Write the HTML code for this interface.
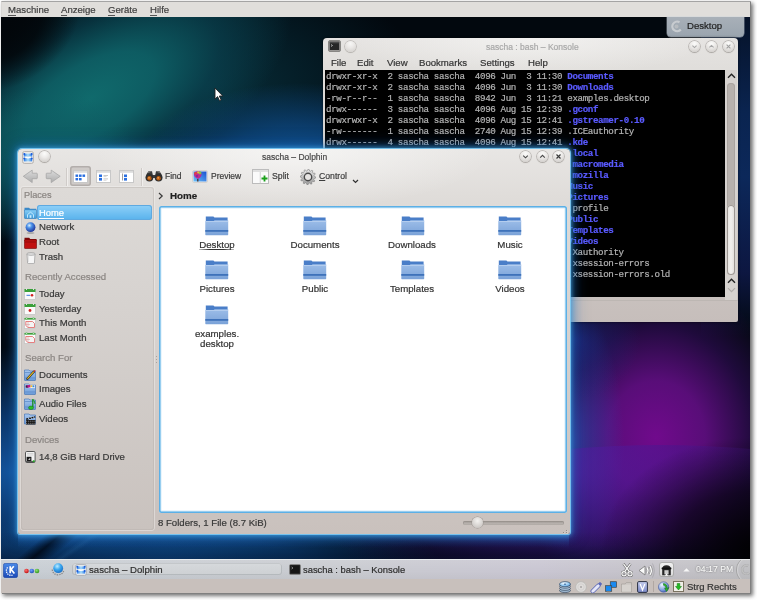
<!DOCTYPE html><html><head><meta charset="utf-8"><style>*{margin:0;padding:0;box-sizing:border-box}
html,body{width:757px;height:600px;overflow:hidden;background:#fff;font-family:"Liberation Sans",sans-serif;position:relative}
.t,#menubar span,.kmenu,#term pre{will-change:transform;-webkit-text-stroke:0.2px currentColor}
.a{position:absolute}
.t{position:absolute;white-space:pre;line-height:1}
#frame{left:0.5px;top:0.5px;width:750.5px;height:593.5px;background:#808080;box-shadow:2px 2px 4px rgba(0,0,0,.55);border-top:1px solid #a4a4a4;border-left:1px solid #d8d6d4}
#menubar{left:1.5px;top:1.5px;width:748px;height:15.5px;background:#e0dedb;font-size:9.6px;color:#3c3c3c;}
#menubar span{position:absolute;top:3.4px;line-height:1;color:#404040}
#menubar u{text-decoration:none;border-bottom:1px solid #555}
#desk{left:1px;top:17px;width:749px;height:542px;overflow:hidden;background:#02080e;}
#desk div{position:absolute}
#panel{left:1px;top:559px;width:749px;height:20px;background:linear-gradient(rgba(255,255,255,.12),rgba(255,255,255,0) 60%,rgba(0,0,0,.03)),linear-gradient(90deg,#c8ced4 0%,#c9cbd0 45%,#c9c6d2 72%,#c4c2c8 88%,#bfbfc2 100%);}
#status{left:1px;top:579px;width:749px;height:14px;background:#c8c0bc;}
#kon{left:323px;top:38px;width:415px;height:284px;border-radius:4px 4px 2px 2px;background:radial-gradient(ellipse 180px 40px at 207px 0,rgba(250,250,249,.6),rgba(250,250,249,0)),linear-gradient(#e6e4e2 0,#e0dedb 30px,#d4cfcb 130px,#c6bebb 100%);box-shadow:0 0 3px rgba(0,0,0,.6)}
#term{left:2px;top:31.5px;width:399.7px;height:227px;background:#000;overflow:hidden}
#term pre{position:absolute;left:1px;top:1.4px;font-family:"Liberation Mono",monospace;font-size:9.2px;letter-spacing:-0.38px;line-height:11px;color:#b4b4b4;}
#term pre b{color:#5a5aff}
.kmenu{font-size:9.6px;color:#333;top:20px}
.btn{position:absolute;width:11px;height:11px;border-radius:50%;background:radial-gradient(circle at 50% 25%,#fcfcfb 0%,#eceae8 40%,#d2cfcc 85%,#c4c1be 100%);box-shadow:0 0 0 .7px rgba(160,156,152,.75),0 1px 1px rgba(120,115,110,.35);}
#dol{left:17.5px;top:148.7px;width:552px;height:385px;border-radius:4px 4px 2px 2px;background:radial-gradient(ellipse 200px 60px at 276px 0,rgba(250,250,249,.75),rgba(250,250,249,0)),linear-gradient(#e8e6e4 0,#dfdcd9 50px,#d6d1ce 200px,#c9c1bd 100%);box-shadow:0 0 0 1px rgba(130,205,245,.85),0 0 4px 1px rgba(70,170,230,.75),0 0 9px 3px rgba(40,130,210,.5),0 0 16px 5px rgba(30,100,180,.28)}
</style></head><body>
<div id="frame" class="a"></div>
<div id="menubar" class="a">
 <span style="left:6.3px"><u>M</u>aschine</span>
 <span style="left:59.5px"><u>A</u>nzeige</span>
 <span style="left:106.3px"><u>G</u>eräte</span>
 <span style="left:148.5px"><u>H</u>ilfe</span>
</div>
<div id="desk" class="a">
 <div style="left:0px;top:-60px;width:420px;height:260px;background:radial-gradient(closest-side,rgba(8,52,64,.85) 0%,rgba(6,40,52,.6) 50%,rgba(4,20,30,0) 100%)"></div>
 <div style="left:-136px;top:-26px;width:450px;height:215px;transform:rotate(-30deg);background:radial-gradient(closest-side,rgba(16,106,108,1) 0%,rgba(14,96,102,.94) 32%,rgba(10,68,82,.64) 64%,rgba(3,11,20,0) 100%)"></div>
 <div style="left:-60px;top:70px;width:200px;height:160px;background:radial-gradient(closest-side,rgba(14,92,100,.8) 0%,rgba(3,11,20,0) 100%)"></div>
 <div style="left:-85px;top:-50px;width:170px;height:120px;transform:rotate(-30deg);background:radial-gradient(closest-side,rgba(2,6,10,1) 0%,rgba(2,6,10,.85) 50%,rgba(2,6,10,0) 100%)"></div>
 <div style="left:134px;top:66px;width:330px;height:170px;background:radial-gradient(closest-side,rgba(18,90,160,.95) 0%,rgba(14,74,136,.7) 50%,rgba(6,40,80,0) 100%)"></div>
 <div style="left:-150px;top:330px;width:320px;height:250px;background:radial-gradient(closest-side,rgba(22,92,170,.9) 0%,rgba(16,72,140,.7) 45%,rgba(6,40,80,0) 100%)"></div>
 <div style="left:-120px;top:490px;width:560px;height:110px;background:radial-gradient(closest-side,rgba(18,86,156,1) 0%,rgba(14,70,130,.8) 50%,rgba(6,40,80,0) 100%)"></div>
 <div style="left:700px;top:0;width:50px;height:320px;background:linear-gradient(rgba(6,18,40,1) 0%,rgba(10,36,80,1) 30%,rgba(12,40,90,1) 50%,rgba(14,24,70,.9) 80%,rgba(26,14,60,0) 100%)"></div>
 <div style="left:515px;top:260px;width:280px;height:320px;background:radial-gradient(closest-side,rgba(112,10,140,1) 0%,rgba(98,14,132,.9) 35%,rgba(50,12,90,.6) 70%,rgba(3,11,20,0) 100%)"></div>
 <div style="left:523px;top:290px;width:100px;height:270px;background:radial-gradient(closest-side,rgba(40,100,210,.5) 0%,rgba(40,80,190,.3) 50%,rgba(40,60,160,0) 100%)"></div>
 <div style="left:209px;top:428px;width:900px;height:400px;border-radius:50%;overflow:hidden"><div style="left:0;top:0;width:900px;height:400px;background:radial-gradient(ellipse 260px 160px at 360px 30px,rgba(88,30,168,.6) 0%,rgba(70,22,140,.5) 45%,rgba(0,0,0,.0) 100%)"></div></div>
 <div style="left:0;top:515px;width:749px;height:27px;background:linear-gradient(rgba(0,10,30,0) 0%,rgba(0,10,30,.15) 50%,rgba(0,10,30,.45) 100%)"></div>
 <div style="left:17px;top:516.5px;width:551px;height:14px;background:linear-gradient(rgba(60,150,230,.45),rgba(40,110,200,.15) 55%,rgba(40,110,200,0))"></div>
 <div style="left:30px;top:517px;width:34px;height:25px;transform:skewX(-50deg);background:linear-gradient(90deg,rgba(0,0,0,0),rgba(0,5,15,.8) 45%,rgba(0,0,0,0))"></div>
 <div style="left:70px;top:517px;width:14px;height:25px;transform:skewX(-55deg);background:linear-gradient(90deg,rgba(80,160,230,0),rgba(80,160,230,.1) 50%,rgba(0,0,0,0))"></div>
 <div style="left:509px;top:263px;width:130px;height:120px;background:radial-gradient(closest-side,rgba(30,50,150,.6) 0%,rgba(30,40,130,.3) 50%,rgba(20,20,80,0) 100%)"></div>
 <div style="left:600px;top:420px;width:300px;height:220px;background:radial-gradient(closest-side,rgba(0,0,0,.9) 0%,rgba(0,0,0,.6) 50%,rgba(0,0,0,0) 100%)"></div>
</div>
<div id="panel" class="a"></div>
<div id="status" class="a"></div>
<!-- desktop toolbox tab -->
<div class="a" style="left:667px;top:17px;width:76.5px;height:19.5px;border-radius:0 0 4px 4px;background:linear-gradient(#a8b0b8,#9aa4ae);box-shadow:0 0 0 .5px rgba(200,210,220,.6)"></div>
<svg class="a" style="left:671px;top:19.5px" width="11" height="13" viewBox="0 0 11 13"><path d="M8.5 2.2 A4.8 4.8 0 1 0 9.8 9.5" stroke="#c8ccd0" stroke-width="2.2" fill="none"/><circle cx="5.5" cy="6.5" r="2" fill="#b8bcc0"/></svg>
<div class="t" style="left:687.4px;top:21px;font-size:9.6px;color:#222">Desktop</div>
<!-- mouse cursor -->
<svg class="a" style="left:214px;top:87px" width="10" height="15" viewBox="0 0 10 15"><path d="M1 1 L1 12 L3.6 9.6 L5.6 13.8 L7.2 13 L5.3 9 L8.8 9 Z" fill="#fff" stroke="#222" stroke-width=".9" stroke-linejoin="round"/></svg>

<div id="kon" class="a">
 <svg class="a" style="left:4.5px;top:2px" width="13" height="12" viewBox="0 0 13 12"><rect x="0.5" y="0.5" width="12" height="11" rx="1.5" fill="#9a9896" stroke="#7a7876" stroke-width=".8"/><rect x="1.8" y="1.8" width="9.4" height="8.2" fill="#262626"/><rect x="1.8" y="1.8" width="9.4" height="1.5" fill="#4a4a4a"/><path d="M3 4.5 L4.5 5.5 L3 6.5" stroke="#ddd" stroke-width=".7" fill="none"/></svg>
 <div class="btn" style="left:22px;top:2.5px;opacity:.8"></div>
 <div class="t" style="left:162.8px;top:4.5px;font-size:8.5px;color:#a8a8a8">sascha : bash – Konsole</div>
 <div class="btn kb" style="left:366px;top:2.5px"><svg width="11" height="11" style="position:absolute;left:0;top:0"><path d="M3.4 4.6 L5.5 6.6 L7.6 4.6" stroke="#a8a8a8" stroke-width="1.1" fill="none"/></svg></div>
 <div class="btn kb" style="left:383px;top:2.5px"><svg width="11" height="11" style="position:absolute;left:0;top:0"><path d="M3.4 6.4 L5.5 4.4 L7.6 6.4" stroke="#a8a8a8" stroke-width="1.1" fill="none"/></svg></div>
 <div class="btn kb" style="left:400px;top:2.5px"><svg width="11" height="11" style="position:absolute;left:0;top:0"><path d="M3.6 3.6 L7.4 7.4 M7.4 3.6 L3.6 7.4" stroke="#a0a0a0" stroke-width="1.1" fill="none"/></svg></div>
 <div class="t kmenu" style="left:8px">File</div>
 <div class="t kmenu" style="left:34.4px">Edit</div>
 <div class="t kmenu" style="left:63.6px">View</div>
 <div class="t kmenu" style="left:96.2px">Bookmarks</div>
 <div class="t kmenu" style="left:157.1px">Settings</div>
 <div class="t kmenu" style="left:205.3px">Help</div>
 <div id="term" class="a"><pre>drwxr-xr-x  2 sascha sascha  4096 Jun  3 11:30 <b>Documents</b>
drwxr-xr-x  2 sascha sascha  4096 Jun  3 11:30 <b>Downloads</b>
-rw-r--r--  1 sascha sascha  8942 Jun  3 11:21 examples.desktop
drwx------  3 sascha sascha  4096 Aug 15 12:39 <b>.gconf</b>
drwxrwxr-x  2 sascha sascha  4096 Aug 15 12:41 <b>.gstreamer-0.10</b>
-rw-------  1 sascha sascha  2740 Aug 15 12:39 .ICEauthority
drwx------  4 sascha sascha  4096 Aug 15 12:41 <b>.kde</b>
drwxr-xr-x  3 sascha sascha  4096 Aug 15 12:41 <b>.local</b>
drwx------  3 sascha sascha  4096 Aug 15 12:41 <b>.macromedia</b>
drwx------  4 sascha sascha  4096 Aug 15 12:41 <b>.mozilla</b>
drwxr-xr-x  2 sascha sascha  4096 Jun  3 11:30 <b>Music</b>
drwxr-xr-x  2 sascha sascha  4096 Jun  3 11:30 <b>Pictures</b>
-rw-r--r--  1 sascha sascha   675 Jun  3 11:21 .profile
drwxr-xr-x  2 sascha sascha  4096 Jun  3 11:30 <b>Public</b>
drwxr-xr-x  2 sascha sascha  4096 Jun  3 11:30 <b>Templates</b>
drwxr-xr-x  2 sascha sascha  4096 Jun  3 11:30 <b>Videos</b>
-rw-------  1 sascha sascha    56 Aug 15 12:39 .Xauthority
-rw-------  1 sascha sascha  1453 Aug 15 12:41 .xsession-errors
-rw-------  1 sascha sascha  1240 Aug 15 12:39 .xsession-errors.old</pre></div>
 <!-- scrollbar -->
 <div class="a" style="left:401.7px;top:31.5px;width:12.6px;height:231px;background:#d6d2cf"></div>
 <svg class="a" style="left:404px;top:35px" width="9" height="6"><path d="M1 4.8 L4.5 1.3 L8 4.8" stroke="#222" stroke-width="1.4" fill="none"/></svg>
 <svg class="a" style="left:404px;top:239.5px" width="9" height="6"><path d="M1 4.8 L4.5 1.3 L8 4.8" stroke="#222" stroke-width="1.4" fill="none"/></svg>
 <svg class="a" style="left:404px;top:249px" width="9" height="6"><path d="M1 1.2 L4.5 4.7 L8 1.2" stroke="#b0aca8" stroke-width="1.2" fill="none"/></svg>
 <div class="a" style="left:403.7px;top:44.7px;width:8.6px;height:192px;border-radius:4px;background:#b7b1ad;box-shadow:inset 0 0 0 1px #aaa4a0"></div>
 <div class="a" style="left:403.7px;top:167px;width:8.6px;height:70px;border-radius:4px;background:linear-gradient(90deg,#e6e3e0,#f2f0ee 50%,#dedad7);box-shadow:inset 0 0 0 1px #9c9692"></div>
 <div class="a" style="left:0;top:261.5px;width:415px;height:1px;background:#bdb7b3"></div>
</div>


<div id="dol" class="a"></div>
<svg class="a" style="left:21.5px;top:150.5px" width="12" height="13" viewBox="0 0 12 13">
<defs><linearGradient id="dib" x1="0" y1="0" x2="1" y2="0"><stop offset="0" stop-color="#2a7ae8"/><stop offset=".5" stop-color="#a8dcfa"/><stop offset="1" stop-color="#2a7ae8"/></linearGradient></defs>
<rect x="0.6" y="0.6" width="10.8" height="11.8" rx="1.8" fill="#f0eeec" stroke="#b0aca8" stroke-width=".9"/>
<rect x="1.8" y="2.6" width="8.4" height="3" fill="url(#dib)"/>
<rect x="1.8" y="7.2" width="8.4" height="3.2" fill="url(#dib)"/>
<circle cx="2.3" cy="2.9" r="1" fill="#1a5ad8"/><circle cx="9.7" cy="2.9" r="1" fill="#1a5ad8"/>
<circle cx="2.3" cy="7.6" r="1" fill="#1a5ad8"/><circle cx="9.7" cy="7.6" r="1" fill="#1a5ad8"/>
<path d="M3.5 5.8 Q6 7.8 8.5 5.8" stroke="#fff" stroke-width="1.3" fill="none"/>
</svg>
<div class="btn" style="left:39px;top:151px"></div>
<div class="t " style="left:261.90px;top:153.10px;font-size:8.5px;color:#484848;">sascha – Dolphin</div>
<div class="btn" style="left:520.0px;top:150.7px"><svg width="11" height="11" style="position:absolute;left:0;top:0"><path d="M3.2 4.6 L5.5 6.8 L7.8 4.6" stroke="#484848" stroke-width="1.15" fill="none"/></svg></div>
<div class="btn" style="left:536.5px;top:150.7px"><svg width="11" height="11" style="position:absolute;left:0;top:0"><path d="M3.2 6.6 L5.5 4.4 L7.8 6.6" stroke="#484848" stroke-width="1.15" fill="none"/></svg></div>
<div class="btn" style="left:553.4px;top:150.7px"><svg width="11" height="11" style="position:absolute;left:0;top:0"><path d="M3.5 3.5 L7.5 7.5 M7.5 3.5 L3.5 7.5" stroke="#3a3a3a" stroke-width="1.2" fill="none"/></svg></div>
<svg class="a" style="left:22px;top:168px" width="40" height="16" viewBox="0 0 40 16">
<defs><linearGradient id="ga" x1="0" y1="0" x2="0" y2="1"><stop offset="0" stop-color="#dcdcdc"/><stop offset="1" stop-color="#acacac"/></linearGradient></defs>
<path d="M1.3 8.3 L10.2 2.1 L10.2 5.2 L14.6 5.2 Q15.3 5.2 15.3 5.9 L15.3 10 Q15.3 10.7 14.6 10.7 L10.2 10.7 L10.2 14.6 Z" fill="url(#ga)" stroke="#a0a0a0" stroke-width="0.7" stroke-linejoin="round"/>
<path d="M38.2 8.3 L29.2 2.1 L29.2 5.2 L24.9 5.2 Q24.2 5.2 24.2 5.9 L24.2 10 Q24.2 10.7 24.9 10.7 L29.2 10.7 L29.2 14.6 Z" fill="url(#ga)" stroke="#a0a0a0" stroke-width="0.7" stroke-linejoin="round"/>
</svg>
<div class="a" style="left:66.00px;top:168.00px;width:1.00px;height:18.00px;background:#cfcbc8;box-shadow:1px 0 0 #f0eeec"></div>
<div class="a" style="left:70.00px;top:166.20px;width:20.70px;height:19.60px;border-radius:3px;background:#cfcbc8;box-shadow:inset 0 0 0 1.5px #b3aeab"></div>
<svg class="a" style="left:73.2px;top:170px" width="15" height="13" viewBox="0 0 15 13"><rect x="0.5" y="0.5" width="14" height="12" fill="#fff" stroke="#c8c8c8"/><rect x="1" y="1" width="13" height="1.8" fill="#dcdcdc"/><rect x="2.5" y="4.5" width="2.6" height="2.4" fill="#2a6fe0"/><rect x="6" y="4.5" width="2.6" height="2.4" fill="#2a6fe0"/><rect x="9.5" y="4.5" width="2.6" height="2.4" fill="#2a6fe0"/><rect x="2.5" y="8" width="2.6" height="2.4" fill="#2a6fe0"/><rect x="6" y="8" width="2.6" height="2.4" fill="#2a6fe0"/></svg>
<svg class="a" style="left:95.5px;top:170px" width="15" height="13" viewBox="0 0 15 13"><rect x="0.5" y="0.5" width="14" height="12" fill="#fff" stroke="#c8c8c8"/><rect x="1" y="1" width="13" height="1.8" fill="#dcdcdc"/><rect x="3" y="4.5" width="3" height="2.6" fill="#2a6fe0"/><rect x="7.5" y="5.0" width="4.5" height="0.8" fill="#bbb"/><rect x="7.5" y="6.3" width="3" height="0.8" fill="#ccc"/><rect x="3" y="8" width="3" height="2.6" fill="#2a6fe0"/><rect x="7.5" y="8.5" width="4.5" height="0.8" fill="#bbb"/><rect x="7.5" y="9.8" width="3" height="0.8" fill="#ccc"/></svg>
<svg class="a" style="left:118.7px;top:170px" width="15" height="13" viewBox="0 0 15 13"><rect x="0.5" y="0.5" width="14" height="12" fill="#fff" stroke="#c8c8c8"/><rect x="1" y="1" width="13" height="1.8" fill="#dcdcdc"/><rect x="3" y="3.5" width="0.8" height="7" fill="#888"/><rect x="5" y="4.5" width="3" height="2.6" fill="#2a6fe0"/><rect x="5" y="8" width="3" height="2.6" fill="#2a6fe0"/></svg>
<div class="a" style="left:140.50px;top:168.00px;width:1.00px;height:18.00px;background:#cfcbc8;box-shadow:1px 0 0 #f0eeec"></div>
<svg class="a" style="left:145px;top:170.2px" width="18" height="12" viewBox="0 0 18 12">
<path d="M0.8 8 Q1 3.5 3.5 1.2 L7 1.2 L7.8 5 L10.2 5 L11 1.2 L14.5 1.2 Q17 3.5 17.2 8 Z" fill="#3a3a3a"/>
<circle cx="4.4" cy="7.6" r="3.9" fill="#2e2e2e"/><circle cx="13.6" cy="7.6" r="3.9" fill="#2e2e2e"/>
<circle cx="4.4" cy="8.3" r="2.2" fill="#b85a10"/><circle cx="13.6" cy="8.3" r="2.2" fill="#b85a10"/>
<circle cx="4" cy="7.8" r=".9" fill="#f0a050"/><circle cx="13.2" cy="7.8" r=".9" fill="#f0a050"/>
<path d="M3 2.5 L5.5 1.8" stroke="#888" stroke-width=".8"/><path d="M12.5 1.8 L15 2.5" stroke="#888" stroke-width=".8"/>
</svg>
<div class="t " style="left:164.80px;top:172.10px;font-size:8.5px;color:#3c3c3c;">Find</div>
<svg class="a" style="left:192px;top:170px" width="16" height="13" viewBox="0 0 16 13">
<defs><linearGradient id="sky" x1="1" y1="0" x2="0" y2="1"><stop offset="0" stop-color="#1a50d0"/><stop offset="1" stop-color="#6ac0f8"/></linearGradient></defs>
<rect x="0.5" y="0.5" width="15" height="12" rx="1.5" fill="#f2f0ee" stroke="#d0ccc8" stroke-width=".8"/>
<rect x="1.5" y="1.5" width="13" height="10" fill="url(#sky)"/>
<path d="M2 4.5 Q2 1.2 5.5 1.2 Q9.5 1.2 9.5 4.5 Q9.5 7 6 9 Q2 7 2 4.5Z" fill="#c02a90"/>
<circle cx="3.6" cy="3.2" r="1.3" fill="#e04040"/><circle cx="8" cy="3" r="1.4" fill="#8ac040"/><circle cx="6.2" cy="2.4" r="1.1" fill="#e0c040"/><circle cx="5" cy="6" r="1" fill="#7a2aa0"/>
<path d="M5.8 9 V11.5" stroke="#4a2a1a" stroke-width="1.2"/>
</svg>
<div class="t " style="left:211.00px;top:172.10px;font-size:8.5px;color:#3c3c3c;">Preview</div>
<svg class="a" style="left:252px;top:169px" width="17" height="15" viewBox="0 0 17 15">
<rect x="0.5" y="0.5" width="16" height="14" fill="#fafafa" stroke="#bcbcbc"/><rect x="1" y="1" width="15" height="2" fill="#e0e0e0"/>
<rect x="7.8" y="3" width="0.8" height="11.5" fill="#c8c8c8"/>
<path d="M9.5 9.5 H15.5 M12.5 6.5 V12.5" stroke="#1aa01a" stroke-width="1.8"/>
</svg>
<div class="t " style="left:271.60px;top:171.94px;font-size:8.7px;color:#3c3c3c;">Split</div>
<svg class="a" style="left:300px;top:168.5px" width="16" height="16" viewBox="0 0 16 16">
<defs><linearGradient id="gg" x1="0" y1="0" x2="0" y2="1"><stop offset="0" stop-color="#eaeaea"/><stop offset="1" stop-color="#9a9a9a"/></linearGradient></defs>
<polygon points="15.80,8.00 15.73,9.02 13.99,9.60 13.73,10.37 14.75,11.90 14.19,12.75 12.38,12.38 11.77,12.92 11.90,14.75 10.98,15.21 9.60,13.99 8.81,14.15 8.00,15.80 6.98,15.73 6.40,13.99 5.63,13.73 4.10,14.75 3.25,14.19 3.62,12.38 3.08,11.77 1.25,11.90 0.79,10.98 2.01,9.60 1.85,8.81 0.20,8.00 0.27,6.98 2.01,6.40 2.27,5.63 1.25,4.10 1.81,3.25 3.62,3.62 4.23,3.08 4.10,1.25 5.02,0.79 6.40,2.01 7.19,1.85 8.00,0.20 9.02,0.27 9.60,2.01 10.37,2.27 11.90,1.25 12.75,1.81 12.38,3.62 12.92,4.23 14.75,4.10 15.21,5.02 13.99,6.40 14.15,7.19" fill="url(#gg)" stroke="#808080" stroke-width="0.6" stroke-linejoin="round"/>
<circle cx="8" cy="8" r="3.7" fill="#e6e4e2" stroke="#4a4a4a" stroke-width="1.4"/>
</svg>
<div class="t " style="left:319.20px;top:171.94px;font-size:8.7px;color:#3c3c3c;"><span style='text-decoration:underline;text-underline-offset:1px'>C</span>ontrol</div>
<svg class="a" style="left:352px;top:179px" width="7" height="5"><path d="M1 1 L3.5 3.5 L6 1" stroke="#333" stroke-width="1.2" fill="none"/></svg>
<div class="a" style="left:21.00px;top:187.40px;width:133.30px;height:342.80px;border-radius:3px;background:linear-gradient(#dddad7 0,#d6d2cf 120px,#c9c2be 100%);box-shadow:inset 0 0 0 1px rgba(185,178,174,.45),0 0 0 1px rgba(245,242,240,.45)"></div>
<div class="t " style="left:23.70px;top:191.41px;font-size:9.2px;color:#8a8582;">Places</div>
<div class="a" style="left:37.40px;top:205.40px;width:114.30px;height:14.30px;border-radius:3px;background:linear-gradient(#8fd0f8,#58b2ec);box-shadow:inset 0 0 0 1px #5ea9e0"></div>
<div class="t " style="left:39.20px;top:207.74px;font-size:9.4px;color:#fff;"><span style='border-bottom:1px solid #fff'>Home</span></div>
<div class="t " style="left:39.20px;top:222.47px;font-size:9.6px;color:#383838;">Network</div>
<div class="t " style="left:39.20px;top:236.87px;font-size:9.6px;color:#383838;">Root</div>
<div class="t " style="left:39.20px;top:251.57px;font-size:9.6px;color:#383838;">Trash</div>
<div class="t " style="left:24.50px;top:272.37px;font-size:9.6px;color:#8a8582;">Recently Accessed</div>
<div class="t " style="left:39.20px;top:288.97px;font-size:9.6px;color:#383838;">Today</div>
<div class="t " style="left:39.20px;top:303.87px;font-size:9.6px;color:#383838;">Yesterday</div>
<div class="t " style="left:39.20px;top:317.87px;font-size:9.6px;color:#383838;">This Month</div>
<div class="t " style="left:39.20px;top:332.77px;font-size:9.6px;color:#383838;">Last Month</div>
<div class="t " style="left:24.50px;top:353.07px;font-size:9.6px;color:#8a8582;">Search For</div>
<div class="t " style="left:39.20px;top:369.97px;font-size:9.6px;color:#383838;">Documents</div>
<div class="t " style="left:39.20px;top:384.47px;font-size:9.6px;color:#383838;">Images</div>
<div class="t " style="left:39.20px;top:398.87px;font-size:9.6px;color:#383838;">Audio Files</div>
<div class="t " style="left:39.20px;top:413.77px;font-size:9.6px;color:#383838;">Videos</div>
<div class="t " style="left:24.50px;top:434.67px;font-size:9.6px;color:#8a8582;">Devices</div>
<div class="t " style="left:39.20px;top:451.57px;font-size:9.6px;color:#383838;">14,8 GiB Hard Drive</div>
<svg class="a" style="left:24px;top:207px" width="13" height="12" viewBox="0 0 13 12"><defs><linearGradient id="hm" x1="0" y1="0" x2="0" y2="1"><stop offset="0" stop-color="#8ad0f8"/><stop offset="1" stop-color="#3a98d8"/></linearGradient></defs><path d="M0.5 0.8 H5 L6 1.8 H12.3 V4 H0.5Z" fill="#3a88c8"/><rect x="0.5" y="2.8" width="12" height="8.7" rx=".6" fill="url(#hm)" stroke="#2a78b8" stroke-width=".6"/><path d="M3.5 10.8 V7.6 L6.5 5.2 L9.5 7.6 V10.8" fill="none" stroke="#c8ecff" stroke-width=".9"/><rect x="5.6" y="8.2" width="1.8" height="2.6" fill="#c8ecff"/></svg>
<svg class="a" style="left:25px;top:221.5px" width="11" height="12" viewBox="0 0 11 12"><defs><radialGradient id="gl" cx="0.38" cy="0.32" r="0.75"><stop offset="0" stop-color="#d8f0ff"/><stop offset="0.35" stop-color="#4a90e8"/><stop offset="1" stop-color="#1a2a90"/></radialGradient></defs><circle cx="5.5" cy="5.2" r="4.9" fill="url(#gl)"/><ellipse cx="5.5" cy="11" rx="4" ry=".7" fill="#9a9a9a"/></svg>
<svg class="a" style="left:24px;top:237px" width="13" height="12" viewBox="0 0 13 12"><path d="M0.5 0.8 H5.2 L6.2 2 H12.5 V4 H0.5Z" fill="#7a0808"/><rect x="0.5" y="2.8" width="12" height="8.7" rx=".6" fill="#c01010" stroke="#700606" stroke-width=".6"/><rect x="0.8" y="4.6" width="11.4" height=".8" fill="#8a0a0a"/></svg>
<svg class="a" style="left:25.5px;top:251.5px" width="10" height="12" viewBox="0 0 10 12"><path d="M1 2 L1.6 11 Q1.7 11.6 2.3 11.6 H7.7 Q8.3 11.6 8.4 11 L9 2" fill="#f6f6f6" stroke="#9a9a9a" stroke-width=".7"/><ellipse cx="5" cy="2" rx="4.2" ry="1.3" fill="#e4e4e4" stroke="#8a8a8a" stroke-width=".6"/><path d="M2.5 4 V10" stroke="#d8d8d8" stroke-width=".6"/></svg>
<svg class="a" style="left:24px;top:287.5px" width="12" height="12" viewBox="0 0 12 12"><rect x="0.5" y="1.5" width="11" height="10" fill="#fafafa" stroke="#bbb" stroke-width="0.6"/><rect x="0.5" y="1" width="11" height="3" fill="#3aa03a"/><rect x="2" y="0" width="1" height="2" fill="#ddd"/><rect x="9" y="0" width="1" height="2" fill="#ddd"/><rect x="2.5" y="6.8" width="3.5" height="1" fill="#3a7ae0"/><circle cx="8" cy="7.3" r="1.3" fill="#d02020"/></svg>
<svg class="a" style="left:24px;top:302.5px" width="12" height="12" viewBox="0 0 12 12"><rect x="0.5" y="1.5" width="11" height="10" fill="#fafafa" stroke="#bbb" stroke-width="0.6"/><rect x="0.5" y="1" width="11" height="3" fill="#3aa03a"/><rect x="2" y="0" width="1" height="2" fill="#ddd"/><rect x="9" y="0" width="1" height="2" fill="#ddd"/><circle cx="6" cy="7.5" r="1.4" fill="#d02020"/></svg>
<svg class="a" style="left:24px;top:316.5px" width="12" height="12" viewBox="0 0 12 12"><rect x="0.5" y="1.5" width="11" height="10" fill="#fafafa" stroke="#bbb" stroke-width="0.6"/><rect x="0.5" y="1" width="11" height="1.6" fill="#3aa03a"/><circle cx="2.5" cy="1.2" r=".8" fill="#fff" stroke="#3a3" stroke-width=".4"/><circle cx="9.5" cy="1.2" r=".8" fill="#fff" stroke="#3a3" stroke-width=".4"/><path d="M1.8 4.5 H8.5 L10.5 6.5 V10.5 H4 L1.8 8.5Z" fill="#f4f4f4" stroke="#e06060" stroke-width=".8"/><path d="M4 5 V10 M1.8 7.5 H6" stroke="#d8a0a0" stroke-width=".6"/></svg>
<svg class="a" style="left:24px;top:331.5px" width="12" height="12" viewBox="0 0 12 12"><rect x="0.5" y="1.5" width="11" height="10" fill="#fafafa" stroke="#bbb" stroke-width="0.6"/><rect x="0.5" y="1" width="11" height="1.6" fill="#3aa03a"/><circle cx="2.5" cy="1.2" r=".8" fill="#fff" stroke="#3a3" stroke-width=".4"/><circle cx="9.5" cy="1.2" r=".8" fill="#fff" stroke="#3a3" stroke-width=".4"/><path d="M1.8 4.5 H8.5 L10.5 6.5 V10.5 H4 L1.8 8.5Z" fill="#f4f4f4" stroke="#e06060" stroke-width=".8"/><path d="M4 5 V10 M1.8 7.5 H6" stroke="#d8a0a0" stroke-width=".6"/></svg>
<svg class="a" style="left:24px;top:368.5px" width="12" height="12" viewBox="0 0 12 12"><defs><linearGradient id="sfg" x1="0" y1="0" x2="0" y2="1"><stop offset="0" stop-color="#a8c8f0"/><stop offset="1" stop-color="#6a9ad8"/></linearGradient></defs><path d="M0.5 1 H5 L6 2 H11.5 V11 Q11.5 11.5 11 11.5 H1 Q0.5 11.5 0.5 11Z" fill="url(#sfg)" stroke="#4a78b8" stroke-width=".7"/><rect x="0.8" y="3.3" width="10.4" height=".7" fill="#5a88c8"/><rect x="0.8" y="8.6" width="10.4" height=".7" fill="#5a88c8"/><path d="M3 10.2 L10.2 2.2" stroke="#222" stroke-width="2.2"/><path d="M3.3 9.8 L9.8 2.6" stroke="#f0c020" stroke-width="1.1"/><path d="M9.5 2.3 L10.8 1 L11.6 1.8 L10.4 3.1Z" fill="#e02020"/><path d="M2.2 11 L3 9.5 L3.8 10.3Z" fill="#222"/></svg>
<svg class="a" style="left:24px;top:383px" width="12" height="12" viewBox="0 0 12 12"><defs><linearGradient id="sfg" x1="0" y1="0" x2="0" y2="1"><stop offset="0" stop-color="#a8c8f0"/><stop offset="1" stop-color="#6a9ad8"/></linearGradient></defs><path d="M0.5 1 H5 L6 2 H11.5 V11 Q11.5 11.5 11 11.5 H1 Q0.5 11.5 0.5 11Z" fill="url(#sfg)" stroke="#4a78b8" stroke-width=".7"/><rect x="0.8" y="3.3" width="10.4" height=".7" fill="#5a88c8"/><rect x="0.8" y="8.6" width="10.4" height=".7" fill="#5a88c8"/><rect x="1.2" y="1.8" width="9.6" height="3.2" fill="#fff"/><rect x="1.5" y="2.2" width="3" height="2.6" fill="#3a1a50"/><rect x="3.5" y="2" width="3" height="2.5" fill="#c01890"/><rect x="6.5" y="2.2" width="2" height="2" fill="#e8c030"/><rect x="8.5" y="2.3" width="1.8" height="2" fill="#3a8ae0"/></svg>
<svg class="a" style="left:24px;top:397.5px" width="12" height="12" viewBox="0 0 12 12"><defs><linearGradient id="sfg" x1="0" y1="0" x2="0" y2="1"><stop offset="0" stop-color="#a8c8f0"/><stop offset="1" stop-color="#6a9ad8"/></linearGradient></defs><path d="M0.5 1 H5 L6 2 H11.5 V11 Q11.5 11.5 11 11.5 H1 Q0.5 11.5 0.5 11Z" fill="url(#sfg)" stroke="#4a78b8" stroke-width=".7"/><rect x="0.8" y="3.3" width="10.4" height=".7" fill="#5a88c8"/><rect x="0.8" y="8.6" width="10.4" height=".7" fill="#5a88c8"/><path d="M8.8 1.2 V9.2" stroke="#128a12" stroke-width="1.2"/><path d="M8.8 1.2 Q11 3 11 6" stroke="#1aa01a" stroke-width="1" fill="none"/><ellipse cx="7" cy="9.8" rx="2.5" ry="1.8" fill="#2ac02a" stroke="#107010" stroke-width=".5"/></svg>
<svg class="a" style="left:24px;top:412.5px" width="12" height="12" viewBox="0 0 12 12"><defs><linearGradient id="sfg2" x1="0" y1="0" x2="0" y2="1"><stop offset="0" stop-color="#a8c8f0"/><stop offset="1" stop-color="#6a9ad8"/></linearGradient></defs><path d="M0.5 1 H5 L6 2 H11.5 V11 H0.5Z" fill="url(#sfg2)" stroke="#4a78b8" stroke-width=".7"/><path d="M2 5.5 L11 3.2 L11.4 4.6 L2.4 6.9Z" fill="#111"/><path d="M4 4.9 L5.5 6.2 M6.5 4.2 L8 5.6 M9 3.6 L10.4 4.9" stroke="#fff" stroke-width=".8"/><rect x="2" y="7" width="9.5" height="4.5" fill="#111"/><path d="M2 8.2 H11.5 M2 10.3 H11.5" stroke="#fff" stroke-width=".5" stroke-dasharray="1.2 .9"/></svg>
<svg class="a" style="left:25px;top:450.5px" width="11" height="12" viewBox="0 0 11 12"><rect x="0.5" y="0.5" width="9.6" height="11" rx="1.2" fill="#f2f2f2" stroke="#555" stroke-width="1"/><path d="M2 2.5 H8.5 M2 4 H8.5" stroke="#c8c8c8" stroke-width=".7"/><rect x="1.6" y="5.8" width="4.8" height="4.2" fill="#1a1a1a"/><path d="M3 8.8 L5.2 7 V8.8Z" fill="#fff"/><rect x="1" y="10.2" width="8.5" height=".9" fill="#333"/><rect x="7.8" y="9.3" width="1.8" height="1.8" fill="#22aa22"/></svg>
<div class="a" style="left:156.00px;top:356.00px;width:1.00px;height:1.00px;background:#a8a29e"></div>
<div class="a" style="left:156.00px;top:359.00px;width:1.00px;height:1.00px;background:#a8a29e"></div>
<div class="a" style="left:156.00px;top:362.00px;width:1.00px;height:1.00px;background:#a8a29e"></div>
<svg class="a" style="left:158px;top:192px" width="6" height="8"><path d="M1 1 L4.2 4 L1 7" stroke="#3a3a3a" stroke-width="1.2" fill="none"/></svg>
<div class="t " style="left:169.50px;top:191.10px;font-size:9.8px;color:#222;font-weight:bold;">Home</div>
<div class="a" style="left:159.00px;top:206.00px;width:407.50px;height:306.50px;border-radius:2.5px;background:#fff;box-shadow:inset 0 0 0 1.5px #5cb0e6,inset 0 0 0 2.5px rgba(160,210,240,.45)"></div>
<svg class="a" style="left:205.00px;top:215.6px" width="24" height="20" viewBox="0 0 24 20"><defs><linearGradient id="fb" x1="0" y1="0" x2="0" y2="1"><stop offset="0" stop-color="#9cbde8"/><stop offset="1" stop-color="#7aa2d8"/></linearGradient></defs>
<path d="M0.8 0.6 H8.4 L9.5 1.6 H22.6 V5.5 H0.8Z" fill="#4a7ec8"/>
<path d="M0.3 5 H8.8 L9.6 4.3 H23.2 V18.6 Q23.2 19.2 22.6 19.2 H0.9 Q0.3 19.2 0.3 18.6Z" fill="url(#fb)"/>
<rect x="0.3" y="14" width="22.9" height="1.8" fill="#3e72ba"/>
<rect x="0.3" y="5" width="22.9" height="0.8" fill="#c4d8f2" opacity=".8"/></svg>
<div class="t" style="left:166.7px;width:100px;text-align:center;top:239.59px;font-size:9.7px;color:#333">Desktop</div>
<svg class="a" style="left:302.80px;top:215.6px" width="24" height="20" viewBox="0 0 24 20"><defs><linearGradient id="fb" x1="0" y1="0" x2="0" y2="1"><stop offset="0" stop-color="#9cbde8"/><stop offset="1" stop-color="#7aa2d8"/></linearGradient></defs>
<path d="M0.8 0.6 H8.4 L9.5 1.6 H22.6 V5.5 H0.8Z" fill="#4a7ec8"/>
<path d="M0.3 5 H8.8 L9.6 4.3 H23.2 V18.6 Q23.2 19.2 22.6 19.2 H0.9 Q0.3 19.2 0.3 18.6Z" fill="url(#fb)"/>
<rect x="0.3" y="14" width="22.9" height="1.8" fill="#3e72ba"/>
<rect x="0.3" y="5" width="22.9" height="0.8" fill="#c4d8f2" opacity=".8"/></svg>
<div class="t" style="left:264.5px;width:100px;text-align:center;top:239.59px;font-size:9.7px;color:#333">Documents</div>
<svg class="a" style="left:400.60px;top:215.6px" width="24" height="20" viewBox="0 0 24 20"><defs><linearGradient id="fb" x1="0" y1="0" x2="0" y2="1"><stop offset="0" stop-color="#9cbde8"/><stop offset="1" stop-color="#7aa2d8"/></linearGradient></defs>
<path d="M0.8 0.6 H8.4 L9.5 1.6 H22.6 V5.5 H0.8Z" fill="#4a7ec8"/>
<path d="M0.3 5 H8.8 L9.6 4.3 H23.2 V18.6 Q23.2 19.2 22.6 19.2 H0.9 Q0.3 19.2 0.3 18.6Z" fill="url(#fb)"/>
<rect x="0.3" y="14" width="22.9" height="1.8" fill="#3e72ba"/>
<rect x="0.3" y="5" width="22.9" height="0.8" fill="#c4d8f2" opacity=".8"/></svg>
<div class="t" style="left:362.3px;width:100px;text-align:center;top:239.59px;font-size:9.7px;color:#333">Downloads</div>
<svg class="a" style="left:498.40px;top:215.6px" width="24" height="20" viewBox="0 0 24 20"><defs><linearGradient id="fb" x1="0" y1="0" x2="0" y2="1"><stop offset="0" stop-color="#9cbde8"/><stop offset="1" stop-color="#7aa2d8"/></linearGradient></defs>
<path d="M0.8 0.6 H8.4 L9.5 1.6 H22.6 V5.5 H0.8Z" fill="#4a7ec8"/>
<path d="M0.3 5 H8.8 L9.6 4.3 H23.2 V18.6 Q23.2 19.2 22.6 19.2 H0.9 Q0.3 19.2 0.3 18.6Z" fill="url(#fb)"/>
<rect x="0.3" y="14" width="22.9" height="1.8" fill="#3e72ba"/>
<rect x="0.3" y="5" width="22.9" height="0.8" fill="#c4d8f2" opacity=".8"/></svg>
<div class="t" style="left:460.1px;width:100px;text-align:center;top:239.59px;font-size:9.7px;color:#333">Music</div>
<svg class="a" style="left:205.00px;top:260.0px" width="24" height="20" viewBox="0 0 24 20"><defs><linearGradient id="fb" x1="0" y1="0" x2="0" y2="1"><stop offset="0" stop-color="#9cbde8"/><stop offset="1" stop-color="#7aa2d8"/></linearGradient></defs>
<path d="M0.8 0.6 H8.4 L9.5 1.6 H22.6 V5.5 H0.8Z" fill="#4a7ec8"/>
<path d="M0.3 5 H8.8 L9.6 4.3 H23.2 V18.6 Q23.2 19.2 22.6 19.2 H0.9 Q0.3 19.2 0.3 18.6Z" fill="url(#fb)"/>
<rect x="0.3" y="14" width="22.9" height="1.8" fill="#3e72ba"/>
<rect x="0.3" y="5" width="22.9" height="0.8" fill="#c4d8f2" opacity=".8"/></svg>
<div class="t" style="left:166.7px;width:100px;text-align:center;top:283.99px;font-size:9.7px;color:#333">Pictures</div>
<svg class="a" style="left:302.80px;top:260.0px" width="24" height="20" viewBox="0 0 24 20"><defs><linearGradient id="fb" x1="0" y1="0" x2="0" y2="1"><stop offset="0" stop-color="#9cbde8"/><stop offset="1" stop-color="#7aa2d8"/></linearGradient></defs>
<path d="M0.8 0.6 H8.4 L9.5 1.6 H22.6 V5.5 H0.8Z" fill="#4a7ec8"/>
<path d="M0.3 5 H8.8 L9.6 4.3 H23.2 V18.6 Q23.2 19.2 22.6 19.2 H0.9 Q0.3 19.2 0.3 18.6Z" fill="url(#fb)"/>
<rect x="0.3" y="14" width="22.9" height="1.8" fill="#3e72ba"/>
<rect x="0.3" y="5" width="22.9" height="0.8" fill="#c4d8f2" opacity=".8"/></svg>
<div class="t" style="left:264.5px;width:100px;text-align:center;top:283.99px;font-size:9.7px;color:#333">Public</div>
<svg class="a" style="left:400.60px;top:260.0px" width="24" height="20" viewBox="0 0 24 20"><defs><linearGradient id="fb" x1="0" y1="0" x2="0" y2="1"><stop offset="0" stop-color="#9cbde8"/><stop offset="1" stop-color="#7aa2d8"/></linearGradient></defs>
<path d="M0.8 0.6 H8.4 L9.5 1.6 H22.6 V5.5 H0.8Z" fill="#4a7ec8"/>
<path d="M0.3 5 H8.8 L9.6 4.3 H23.2 V18.6 Q23.2 19.2 22.6 19.2 H0.9 Q0.3 19.2 0.3 18.6Z" fill="url(#fb)"/>
<rect x="0.3" y="14" width="22.9" height="1.8" fill="#3e72ba"/>
<rect x="0.3" y="5" width="22.9" height="0.8" fill="#c4d8f2" opacity=".8"/></svg>
<div class="t" style="left:362.3px;width:100px;text-align:center;top:283.99px;font-size:9.7px;color:#333">Templates</div>
<svg class="a" style="left:498.40px;top:260.0px" width="24" height="20" viewBox="0 0 24 20"><defs><linearGradient id="fb" x1="0" y1="0" x2="0" y2="1"><stop offset="0" stop-color="#9cbde8"/><stop offset="1" stop-color="#7aa2d8"/></linearGradient></defs>
<path d="M0.8 0.6 H8.4 L9.5 1.6 H22.6 V5.5 H0.8Z" fill="#4a7ec8"/>
<path d="M0.3 5 H8.8 L9.6 4.3 H23.2 V18.6 Q23.2 19.2 22.6 19.2 H0.9 Q0.3 19.2 0.3 18.6Z" fill="url(#fb)"/>
<rect x="0.3" y="14" width="22.9" height="1.8" fill="#3e72ba"/>
<rect x="0.3" y="5" width="22.9" height="0.8" fill="#c4d8f2" opacity=".8"/></svg>
<div class="t" style="left:460.1px;width:100px;text-align:center;top:283.99px;font-size:9.7px;color:#333">Videos</div>
<svg class="a" style="left:205.00px;top:304.9px" width="24" height="20" viewBox="0 0 24 20"><defs><linearGradient id="fb" x1="0" y1="0" x2="0" y2="1"><stop offset="0" stop-color="#9cbde8"/><stop offset="1" stop-color="#7aa2d8"/></linearGradient></defs>
<path d="M0.8 0.6 H8.4 L9.5 1.6 H22.6 V5.5 H0.8Z" fill="#4a7ec8"/>
<path d="M0.3 5 H8.8 L9.6 4.3 H23.2 V18.6 Q23.2 19.2 22.6 19.2 H0.9 Q0.3 19.2 0.3 18.6Z" fill="url(#fb)"/>
<rect x="0.3" y="14" width="22.9" height="1.8" fill="#3e72ba"/>
<rect x="0.3" y="5" width="22.9" height="0.8" fill="#c4d8f2" opacity=".8"/></svg>
<div class="t" style="left:166.7px;width:100px;text-align:center;top:328.89px;font-size:9.7px;color:#333">examples.</div>
<div class="t" style="left:166.7px;width:100px;text-align:center;top:338.69px;font-size:9.7px;color:#333">desktop</div>
<div class="a" style="left:198.60px;top:248.80px;width:35.70px;height:1.00px;background:linear-gradient(90deg,rgba(60,60,60,.3),#333 30%,#333 70%,rgba(60,60,60,.3))"></div>
<div class="t " style="left:157.70px;top:517.87px;font-size:9.6px;color:#383838;">8 Folders, 1 File (8.7 KiB)</div>
<div class="a" style="left:463.00px;top:520.60px;width:101.00px;height:4.60px;border-radius:2.5px;background:linear-gradient(#9c9692,#b9b3af 70%,#d2ccc8);box-shadow:inset 0 0 0 .5px rgba(140,134,130,.7)"></div>
<div class="a" style="left:472px;top:517.4px;width:11px;height:11px;border-radius:50%;background:radial-gradient(circle at 50% 35%,#f4f2f0,#d0ccc9 70%,#b8b3af);box-shadow:0 0 0 .6px #9c9692"></div>
<div class="a" style="left:565.50px;top:529.50px;width:1.00px;height:1.00px;background:rgba(120,114,110,.7);box-shadow:.5px .5px 0 rgba(255,255,255,.6)"></div>
<div class="a" style="left:563.00px;top:532.00px;width:1.00px;height:1.00px;background:rgba(120,114,110,.7);box-shadow:.5px .5px 0 rgba(255,255,255,.6)"></div>
<div class="a" style="left:566.00px;top:532.00px;width:1.00px;height:1.00px;background:rgba(120,114,110,.7);box-shadow:.5px .5px 0 rgba(255,255,255,.6)"></div>
<div class="a" style="left:1.00px;top:559.00px;width:749.00px;height:1.00px;background:rgba(235,238,240,.9)"></div>
<svg class="a" style="left:2.8px;top:562.8px" width="15" height="15" viewBox="0 0 15 15"><defs><linearGradient id="kg" x1="0" y1="0" x2="0" y2="1"><stop offset="0" stop-color="#4a8ae8"/><stop offset="1" stop-color="#1a4ab8"/></linearGradient></defs><rect x="0.3" y="0.3" width="14.4" height="14.4" rx="2.2" fill="url(#kg)" stroke="#1a3a90" stroke-width=".5"/><path d="M7.2 3.2 V10.3 M7.2 7.2 L10.8 3.2 M8 6.4 L11.4 10.5" stroke="#fff" stroke-width="1.7" fill="none"/><path d="M4.6 4.4 A4.8 4.8 0 0 0 9.5 12.2" stroke="#fff" stroke-width="1.3" fill="none" stroke-dasharray="1.3 .9"/></svg>
<svg class="a" style="left:24px;top:567.5px" width="16" height="6" viewBox="0 0 16 6"><defs><radialGradient id="dr" cx=".4" cy=".35" r=".7"><stop offset="0" stop-color="#ff7070"/><stop offset="1" stop-color="#b80808"/></radialGradient><radialGradient id="db" cx=".4" cy=".35" r=".7"><stop offset="0" stop-color="#70a0ff"/><stop offset="1" stop-color="#1a48b0"/></radialGradient><radialGradient id="dg" cx=".4" cy=".35" r=".7"><stop offset="0" stop-color="#90e070"/><stop offset="1" stop-color="#2a9018"/></radialGradient></defs><circle cx="2.5" cy="3" r="2.3" fill="url(#dr)"/><circle cx="7.8" cy="3" r="2.3" fill="url(#db)"/><circle cx="13" cy="3" r="2.3" fill="url(#dg)"/></svg>
<svg class="a" style="left:50.5px;top:563px" width="14" height="13" viewBox="0 0 14 13"><defs><radialGradient id="pg" cx="0.4" cy="0.3" r="0.7"><stop offset="0" stop-color="#c0ecff"/><stop offset=".5" stop-color="#3aa8f0"/><stop offset="1" stop-color="#1a70c8"/></radialGradient></defs><circle cx="7.2" cy="5.2" r="4.9" fill="url(#pg)"/><path d="M1.2 6.5 Q2 11.5 7 11.8 Q11.5 11.5 12.6 8" stroke="#8a8a8a" stroke-width="1.3" fill="none" stroke-dasharray="1.4 1"/></svg>
<div class="a" style="left:71.70px;top:563.10px;width:209.90px;height:12.40px;border-radius:3px;background:linear-gradient(#d6d9dc,#cdd0d3);box-shadow:inset 0 0 0 1px rgba(160,165,170,.55),inset 0 1px 0 rgba(255,255,255,.6)"></div>
<svg class="a" style="left:74.5px;top:563.8px" width="12" height="12" viewBox="0 0 12 12"><defs><linearGradient id="dib2" x1="0" y1="0" x2="1" y2="0"><stop offset="0" stop-color="#2a7ae8"/><stop offset=".5" stop-color="#a8dcfa"/><stop offset="1" stop-color="#2a7ae8"/></linearGradient></defs><rect x="0.6" y="0.6" width="10.8" height="10.8" rx="1.8" fill="#eef0f2" stroke="#a8acb0" stroke-width=".9"/><rect x="1.8" y="2.4" width="8.4" height="2.8" fill="url(#dib2)"/><rect x="1.8" y="6.6" width="8.4" height="3" fill="url(#dib2)"/><circle cx="2.3" cy="2.7" r="1" fill="#1a5ad8"/><circle cx="9.7" cy="2.7" r="1" fill="#1a5ad8"/><circle cx="2.3" cy="7" r="1" fill="#1a5ad8"/><circle cx="9.7" cy="7" r="1" fill="#1a5ad8"/><path d="M3.5 5.4 Q6 7.2 8.5 5.4" stroke="#fff" stroke-width="1.2" fill="none"/></svg>
<div class="t " style="left:88.90px;top:564.87px;font-size:9.6px;color:#2e2e2e;">sascha – Dolphin</div>
<svg class="a" style="left:288.5px;top:563.7px" width="12" height="11" viewBox="0 0 12 11"><rect x="0.4" y="0.4" width="11.2" height="10.2" rx="1.5" fill="#2a2a2a" stroke="#8a8a8a" stroke-width="0.8"/><rect x="1.5" y="1.5" width="9" height="7.5" fill="#151515"/><path d="M2.5 3 L4 4 L2.5 5" stroke="#ccc" stroke-width=".6" fill="none"/></svg>
<div class="t " style="left:302.50px;top:565.04px;font-size:9.4px;color:#2e2e2e;">sascha : bash – Konsole</div>
<svg class="a" style="left:620.5px;top:563px" width="12" height="14" viewBox="0 0 12 14"><g stroke="#6a6a6a" stroke-width="2.4" fill="none"><path d="M2.5 0.8 L8 8.2 M9.5 0.8 L4 8.2"/><circle cx="3" cy="10.8" r="2.1"/><circle cx="9" cy="10.8" r="2.1"/></g><g stroke="#fafafa" stroke-width="1.2" fill="none"><path d="M2.5 0.8 L8 8.2 M9.5 0.8 L4 8.2"/><circle cx="3" cy="10.8" r="2.1"/><circle cx="9" cy="10.8" r="2.1"/></g></svg>
<svg class="a" style="left:637.5px;top:562.5px" width="17" height="15" viewBox="0 0 17 15"><g stroke="#808080" stroke-width="2.6" fill="none"><path d="M9 4.5 Q11 7.5 9 10.5 M11.8 2.8 Q14.8 7.5 11.8 12.2"/></g><g stroke="#fafafa" stroke-width="1.4" fill="none"><path d="M9 4.5 Q11 7.5 9 10.5 M11.8 2.8 Q14.8 7.5 11.8 12.2"/></g><path d="M1 7.5 L7 3 V12 Z" fill="#fafafa" stroke="#808080" stroke-width=".9" stroke-linejoin="round"/><path d="M14.5 0.5 Q18 7.5 14.5 14.5" stroke="rgba(120,120,120,.35)" stroke-width=".8" fill="none"/></svg>
<div class="a" style="left:659.40px;top:562.20px;width:14.30px;height:14.40px;border-radius:3px;background:linear-gradient(#f2f2f2,#dadada);box-shadow:inset 0 0 0 1px rgba(140,140,140,.65)"></div>
<svg class="a" style="left:661px;top:564px" width="11" height="12" viewBox="0 0 11 12"><path d="M1.2 11.2 V5 Q1.2 1.2 5.5 1.2 Q9.8 1.2 9.8 5 V11.2 Z" fill="#262626"/><rect x="0.6" y="3.6" width="9.8" height="1.6" rx=".5" fill="#111"/><rect x="3.4" y="6.2" width="4.2" height="4.2" fill="#cfcfcf"/><path d="M3.8 11.8 L5.5 9.4 L7.2 11.8Z" fill="#fff"/></svg>
<svg class="a" style="left:682.5px;top:567.8px" width="7" height="4" viewBox="0 0 7 4"><path d="M0.3 3.6 L3.5 0.3 L6.7 3.6Z" fill="#f6f6f6"/></svg>
<div class="t " style="left:696.40px;top:564.84px;font-size:8.7px;color:#fafafa;text-shadow:0 0 1px rgba(70,70,70,.9),0 0 2px rgba(90,90,90,.5);">04:17 PM</div>
<div class="a" style="left:734px;top:559.5px;width:16px;height:19.5px;overflow:hidden"><div class="a" style="left:2px;top:-4px;width:30px;height:28px;border-radius:50%;box-shadow:inset 1px 0 0 rgba(120,120,120,.55),inset 2px 0 1px rgba(255,255,255,.35)"></div><svg class="a" style="left:6px;top:4px" width="11" height="11"><path d="M8.5 2 A4.2 4.2 0 1 0 9.3 8.6" stroke="rgba(235,235,235,.85)" stroke-width="1.6" fill="none"/><path d="M8.5 2 A4.2 4.2 0 1 0 9.3 8.6" stroke="rgba(120,120,120,.3)" stroke-width="2.4" fill="none" style="mix-blend-mode:multiply"/></svg></div>
<svg class="a" style="left:559px;top:580.5px" width="12" height="12" viewBox="0 0 12 12"><defs><radialGradient id="hd" cx=".4" cy=".3" r=".8"><stop offset="0" stop-color="#f4faff"/><stop offset=".6" stop-color="#8ac4f0"/><stop offset="1" stop-color="#3a7ac0"/></radialGradient></defs><ellipse cx="6" cy="9.6" rx="5.5" ry="2" fill="#9ab4cc" stroke="#2a3a50" stroke-width=".6"/><ellipse cx="6" cy="7.4" rx="5.5" ry="2" fill="#aac4dc" stroke="#2a3a50" stroke-width=".6"/><ellipse cx="6" cy="5.2" rx="5.5" ry="2" fill="#bad0e4" stroke="#2a3a50" stroke-width=".6"/><ellipse cx="6" cy="3.2" rx="5.5" ry="2.6" fill="url(#hd)" stroke="#2a3a50" stroke-width=".6"/><ellipse cx="6" cy="3.2" rx="1.2" ry=".6" fill="#3a6aa0"/></svg>
<svg class="a" style="left:574.7px;top:580.5px" width="12" height="12" viewBox="0 0 12 12"><circle cx="6" cy="6" r="5.4" fill="#dedcda" stroke="#b8b6b4" stroke-width=".8"/><circle cx="6" cy="6" r="3.2" fill="none" stroke="#cfcdcb" stroke-width=".8"/><circle cx="6" cy="6" r="1" fill="#a8a6a4"/></svg>
<svg class="a" style="left:590px;top:580.5px" width="12" height="12" viewBox="0 0 12 12"><path d="M1.2 9.2 L7.2 3.2 Q8.5 2.5 9.3 3.3 L9.7 3.7 Q10.5 4.5 9.8 5.8 L3.8 11.8 Q2.5 12.5 1.6 11.6 L1.4 11.4 Q.5 10.5 1.2 9.2Z" fill="#e4e6f8" stroke="#4a58b0" stroke-width=".9"/><path d="M8.6 2.6 L10 1.2 L11.8 3 L10.4 4.4Z" fill="#5a68c0" stroke="#4a58b0" stroke-width=".5"/></svg>
<svg class="a" style="left:605px;top:580.5px" width="12" height="12" viewBox="0 0 12 12"><rect x="5.3" y="0.7" width="6.2" height="5.6" fill="#1a8af0" stroke="#444" stroke-width=".7"/><rect x="0.5" y="4.7" width="6.2" height="5.6" fill="#1a8af0" stroke="#444" stroke-width=".7"/><rect x="1.8" y="10.3" width="3.6" height="1.2" fill="#888"/></svg>
<svg class="a" style="left:621px;top:580.5px" width="11" height="12" viewBox="0 0 11 12"><path d="M0.5 3 H4.2 L5.2 1.6 H10.5 V11 H0.5Z" fill="#cdc9c5" stroke="#a39f9b" stroke-width=".7"/><rect x="0.9" y="3.8" width="9.2" height="6.8" fill="#d6d2ce"/></svg>
<svg class="a" style="left:636.5px;top:580.5px" width="11" height="12" viewBox="0 0 11 12"><defs><linearGradient id="vb" x1="0" y1="0" x2="0" y2="1"><stop offset="0" stop-color="#c8d0f0"/><stop offset="1" stop-color="#7a88c8"/></linearGradient></defs><rect x="0.6" y="0.6" width="9.8" height="10.8" rx="1.2" fill="url(#vb)" stroke="#2a3040" stroke-width="1"/><path d="M3.2 3 L5.5 9 L7.8 3" stroke="#fff" stroke-width="1.2" fill="none"/></svg>
<div class="a" style="left:652.80px;top:581.00px;width:1.00px;height:11.00px;background:rgba(160,150,145,.6)"></div>
<svg class="a" style="left:657.5px;top:580.5px" width="12" height="12" viewBox="0 0 12 12"><defs><radialGradient id="gb2" cx=".35" cy=".3" r=".8"><stop offset="0" stop-color="#f0f6ff"/><stop offset=".55" stop-color="#8aa8e0"/><stop offset="1" stop-color="#3a5ab0"/></radialGradient></defs><circle cx="5.6" cy="6" r="5.2" fill="url(#gb2)" stroke="#3a4a90" stroke-width=".5"/><path d="M5.5 2.5 Q9.5 3 9 7.5 L10.8 6.5 L8.6 10.5 L6.6 7.2 L8 7.6 Q8 4.5 5.5 4.2Z" fill="#2ab82a" stroke="#127012" stroke-width=".5"/></svg>
<div class="a" style="left:673.20px;top:580.80px;width:10.60px;height:11.00px;background:#f0f0e8;box-shadow:inset 0 0 0 1px #7a7260"></div>
<svg class="a" style="left:675px;top:582.5px" width="7" height="8" viewBox="0 0 7 8"><path d="M3.5 7 L0.5 3.5 H2.2 V0.5 H4.8 V3.5 H6.5Z" fill="#22bb22" stroke="#117711" stroke-width=".5"/></svg>
<div class="t " style="left:687.10px;top:581.56px;font-size:9.5px;color:#333;">Strg Rechts</div>
</body></html>
